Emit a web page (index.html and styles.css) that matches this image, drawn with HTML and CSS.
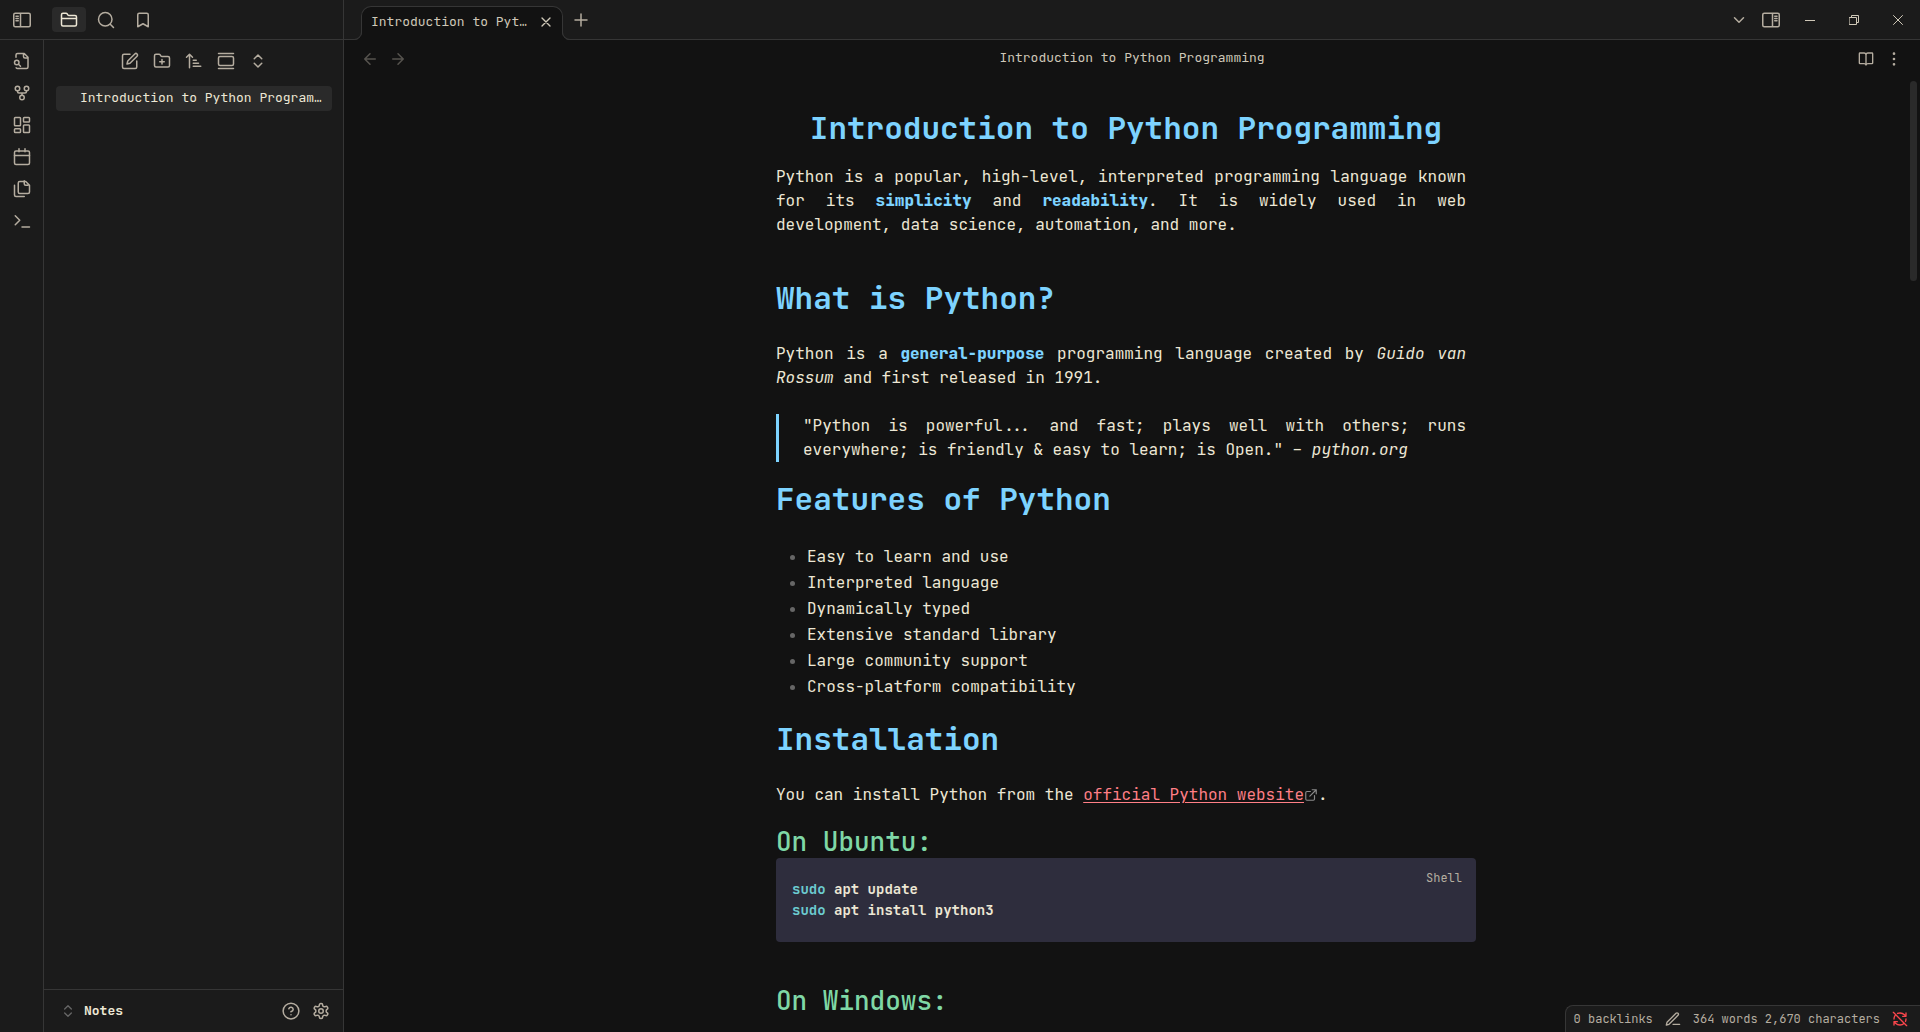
FILE: index.html
```html
<!DOCTYPE html>
<html lang="en">
<head>
<meta charset="utf-8">
<meta name="viewport" content="width=device-width, initial-scale=1">
<title>Introduction to Python Programming - Notes</title>
<link rel="stylesheet" href="styles.css">
</head>
<body>
<div class="app">
  <aside class="left">
    <header class="left-tabs">
      <button class="icon-btn ribbon-toggle" aria-label="Toggle left sidebar"><svg viewBox="0 0 24 24"><rect x="1" y="3" width="22" height="18" rx="2"/><path d="M10 4v16M4 7h3M4 10h3M4 13h3"/></svg></button>
      <button class="icon-btn side-tab active" aria-label="Files"><svg viewBox="0 0 24 24"><path d="M20 20a2 2 0 0 0 2-2V8a2 2 0 0 0-2-2h-7.900a2 2 0 0 1-1.690-.9L9.600 3.900A2 2 0 0 0 7.930 3H4a2 2 0 0 0-2 2v13a2 2 0 0 0 2 2ZM2 10h20"/></svg></button>
      <button class="icon-btn side-tab" aria-label="Search"><svg viewBox="0 0 24 24"><circle cx="11" cy="11" r="9"/><path d="m22 22-4.300-4.300"/></svg></button>
      <button class="icon-btn side-tab" aria-label="Bookmarks"><svg viewBox="0 0 24 24"><path d="m19 21-7-4-7 4V5a2 2 0 0 1 2-2h10a2 2 0 0 1 2 2z"/></svg></button>
    </header>
    <div class="left-body">
      <nav class="ribbon" aria-label="Ribbon">
        <button class="icon-btn" aria-label="Quick switcher"><svg viewBox="0 0 24 24"><path d="M14 2v4a2 2 0 0 0 2 2h4M4.270 21A2 2 0 0 0 6 22h12a2 2 0 0 0 2-2V7l-5-5H6a2 2 0 0 0-2 2v3M8 17l2 2"/><circle cx="5" cy="14" r="3"/></svg></button>
        <button class="icon-btn" aria-label="Graph view"><svg viewBox="0 0 24 24"><circle cx="12" cy="18" r="3"/><circle cx="6" cy="6" r="3"/><circle cx="18" cy="6" r="3"/><path d="M18 9v1a2 2 0 0 1-2 2H8a2 2 0 0 1-2-2V9M12 12v3"/></svg></button>
        <button class="icon-btn" aria-label="New canvas"><svg viewBox="0 0 24 24"><rect x="2" y="2" width="8" height="11" rx="1"/><rect x="14" y="2" width="8" height="6" rx="1"/><rect x="14" y="12" width="8" height="10" rx="1"/><rect x="2" y="17" width="8" height="5" rx="1"/></svg></button>
        <button class="icon-btn" aria-label="Daily note"><svg viewBox="0 0 24 24"><rect x="2" y="4" width="20" height="18" rx="2"/><path d="M16 1v4M8 1v4M2 10h20"/></svg></button>
        <button class="icon-btn" aria-label="Templates"><svg viewBox="0 0 24 24"><path d="M20 7h-3a2 2 0 0 1-2-2V1M9 18a2 2 0 0 1-2-2V4a2 2 0 0 1 2-2h8l5 5v9a2 2 0 0 1-2 2ZM2 7v13a2 2 0 0 0 2 2h11"/></svg></button>
        <button class="icon-btn" aria-label="Command palette"><svg viewBox="0 0 24 24"><path d="m3 17 6-6-6-6M12 20h10"/></svg></button>
      </nav>
      <section class="files">
        <div class="file-actions">
          <button class="icon-btn" aria-label="New note"><svg viewBox="0 0 24 24"><path d="M12 3H4a2 2 0 0 0-2 2v15a2 2 0 0 0 2 2h15a2 2 0 0 0 2-2v-8M18.400 2.600a2.100 2.100 0 0 1 3 3L12 15l-4 1 1-4Z"/></svg></button>
          <button class="icon-btn" aria-label="New folder"><svg viewBox="0 0 24 24"><path d="M12 10v6M9 13h6M20 20a2 2 0 0 0 2-2V8a2 2 0 0 0-2-2h-7.900a2 2 0 0 1-1.690-.9L9.600 3.900A2 2 0 0 0 7.930 3H4a2 2 0 0 0-2 2v13a2 2 0 0 0 2 2Z"/></svg></button>
          <button class="icon-btn" aria-label="Sort order"><svg viewBox="0 0 24 24"><path d="m2 7 4-4 4 4M6 3v18M11 11h4M11 15h7M11 19h10"/></svg></button>
          <button class="icon-btn" aria-label="Auto-reveal file"><svg viewBox="0 0 24 24"><path d="M2 2h20M2 22h20"/><rect x="2" y="6" width="20" height="12" rx="2"/></svg></button>
          <button class="icon-btn" aria-label="Expand all"><svg viewBox="0 0 24 24"><path d="m7 15 5 5 5-5M7 9l5-5 5 5"/></svg></button>
        </div>
        <a class="file" href="#note">Introduction to Python Programming</a>
        <footer class="vault">
          <button class="vault-name"><svg class="dim" viewBox="0 0 24 24"><path d="m7 15 5 5 5-5M7 9l5-5 5 5"/></svg>Notes</button>
          <button class="icon-btn" aria-label="Help"><svg viewBox="0 0 24 24"><circle cx="12" cy="12" r="10.500"/><path d="M9.090 9a3 3 0 0 1 5.830 1c0 2-3 3-3 3M12 17h.01"/></svg></button>
          <button class="icon-btn" aria-label="Settings"><svg viewBox="0 0 24 24"><path d="M12.220 2h-.44a2 2 0 0 0-2 2v.18a2 2 0 0 1-1 1.730l-.43.25a2 2 0 0 1-2 0l-.15-.08a2 2 0 0 0-2.730.73l-.22.38a2 2 0 0 0 .73 2.730l.15.1a2 2 0 0 1 1 1.720v.51a2 2 0 0 1-1 1.740l-.15.09a2 2 0 0 0-.73 2.730l.22.38a2 2 0 0 0 2.730.73l.15-.08a2 2 0 0 1 2 0l.43.25a2 2 0 0 1 1 1.730V20a2 2 0 0 0 2 2h.44a2 2 0 0 0 2-2v-.18a2 2 0 0 1 1-1.730l.43-.25a2 2 0 0 1 2 0l.15.08a2 2 0 0 0 2.730-.73l.22-.39a2 2 0 0 0-.73-2.730l-.15-.08a2 2 0 0 1-1-1.740v-.5a2 2 0 0 1 1-1.740l.15-.09a2 2 0 0 0 .73-2.730l-.22-.38a2 2 0 0 0-2.730-.73l-.15.08a2 2 0 0 1-2 0l-.43-.25a2 2 0 0 1-1-1.730V4a2 2 0 0 0-2-2z"/><circle cx="12" cy="12" r="3"/></svg></button>
        </footer>
      </section>
    </div>
  </aside>

  <main class="workspace">
    <header class="tab-bar">
      <div class="tab">
        <span class="tab-title">Introduction to Python Programming</span>
        <button class="tab-close" aria-label="Close tab"><svg viewBox="0 0 24 24"><path d="M18 6 6 18M6 6l12 12"/></svg></button>
      </div>
      <button class="icon-btn new-tab" aria-label="New tab"><svg viewBox="0 0 24 24"><path d="M4 12h16M12 4v16"/></svg></button>
      <div class="window-tools">
        <button class="icon-btn" aria-label="Tab list"><svg viewBox="0 0 24 24"><path d="m6 9 6 6 6-6"/></svg></button>
        <button class="icon-btn" aria-label="Toggle right sidebar"><svg viewBox="0 0 24 24"><rect x="1" y="3" width="22" height="18" rx="2"/><path d="M14 4v16M17 7h3M17 10h3M17 13h3"/></svg></button>
      </div>
      <div class="window-controls">
        <button aria-label="Minimize"><svg viewBox="0 0 10 10"><path d="M0 5.500h10"/></svg></button>
        <button aria-label="Restore"><svg viewBox="0 0 10 10"><path d="M.5 2.500h7v7h-7zM2.500 2.500v-2h7v7h-2"/></svg></button>
        <button aria-label="Close"><svg viewBox="0 0 10 10"><path d="m.5.5 9 9M9.500.5l-9 9"/></svg></button>
      </div>
    </header>
    <div class="view-header">
      <div class="history">
        <button class="icon-btn" aria-label="Back"><svg viewBox="0 0 24 24"><path d="m12 19-7-7 7-7M19 12H5"/></svg></button>
        <button class="icon-btn" aria-label="Forward"><svg viewBox="0 0 24 24"><path d="M5 12h14M12 5l7 7-7 7"/></svg></button>
      </div>
      <div class="view-title">Introduction to Python Programming</div>
      <div class="view-actions">
        <button class="icon-btn" aria-label="Reading view"><svg viewBox="0 0 24 24"><path d="M12 6v15M3 19a1 1 0 0 1-1-1V4a1 1 0 0 1 1-1h6a3 3 0 0 1 3 3 3 3 0 0 1 3-3h6a1 1 0 0 1 1 1v14a1 1 0 0 1-1 1h-6a3 3 0 0 0-3 2 3 3 0 0 0-3-2z"/></svg></button>
        <button class="icon-btn" aria-label="More options"><svg viewBox="0 0 24 24"><circle cx="12" cy="12" r="1"/><circle cx="12" cy="4" r="1"/><circle cx="12" cy="20" r="1"/></svg></button>
      </div>
    </div>
    <div class="scroller">
      <article class="note" id="note">
        <h1>Introduction to Python Programming</h1>
        <p>Python is a popular, high-level, interpreted programming language known for its <strong>simplicity</strong> and <strong>readability</strong>. It is widely used in web development, data science, automation, and more.</p>
        <h2>What is Python?</h2>
        <p>Python is a <strong>general-purpose</strong> programming language created by <em>Guido van Rossum</em> and first released in 1991.</p>
        <blockquote>"Python is powerful... and fast; plays well with others; runs everywhere; is friendly &amp; easy to learn; is Open." – <em>python.org</em></blockquote>
        <h2>Features of Python</h2>
        <ul>
          <li>Easy to learn and use</li>
          <li>Interpreted language</li>
          <li>Dynamically typed</li>
          <li>Extensive standard library</li>
          <li>Large community support</li>
          <li>Cross-platform compatibility</li>
        </ul>
        <h2>Installation</h2>
        <p class="tight">You can install Python from the <a href="#python">official Python website</a><svg class="external" viewBox="0 0 24 24"><path d="M14 3h7v7M10 14 21 3M18 13v6a2 2 0 0 1-2 2H5a2 2 0 0 1-2-2V8a2 2 0 0 1 2-2h6"/></svg>.</p>
        <h3>On Ubuntu:</h3>
        <div class="code">
          <pre><code><span class="cmd">sudo</span> apt update
<span class="cmd">sudo</span> apt install python3</code></pre>
          <button class="lang">Shell</button>
        </div>
        <h3>On Windows:</h3>
      </article>
      <div class="track"><div class="thumb"></div></div>
    </div>
    <footer class="status">
      <span>0 backlinks</span>
      <svg viewBox="0 0 24 24"><path d="M12 20h10M16.500 3.500a2.100 2.100 0 0 1 3 3L6 20l-4 1 1-4Z"/></svg>
      <span>364 words 2,670 characters</span>
      <svg class="sync-off" viewBox="0 0 24 24"><path d="M21 8 18.740 5.740A9.750 9.750 0 0 0 12 3c-1.300 0-2.600.3-3.700.7M8 16H3v5M3 12c0-2.500 1-4.800 2.600-6.400M3 16l2.260 2.260A9.750 9.750 0 0 0 12 21c2.500 0 4.700-1 6.400-2.600M21 12c0 1.300-.3 2.600-.7 3.700M21 3v5h-5M2 2l20 20"/></svg>
    </footer>
  </main>
</div>
</body>
</html>
```
FILE: styles.css
```css
:root {
  --bg: #121212;
  --bg-side: #1b1b1b;
  --bg-active: #2a2a2a;
  --line: #363636;
  --text: #ede7d5;
  --muted: #b5ada0;
  --faint: #666666;
  --blue: #7dd3ff;
  --green: #7fd8a6;
  --red: #ff7f86;
  --mono: "JetBrains Mono", "DejaVu Sans Mono", monospace;
}

* { box-sizing: border-box; }

body {
  margin: 0;
  background: var(--bg);
  color: var(--text);
  font: 13px/20px var(--mono);
}

button {
  padding: 0;
  border: 0;
  background: none;
  color: inherit;
  font: inherit;
}

svg {
  display: block;
  width: 18px;
  height: 18px;
  fill: none;
  stroke: currentColor;
  stroke-width: 2;
  stroke-linecap: round;
  stroke-linejoin: round;
}

.icon-btn {
  display: flex;
  align-items: center;
  justify-content: center;
  color: var(--muted);
}

.app {
  display: grid;
  grid-template-columns: 344px minmax(0, 1fr);
  height: 100vh;
}

/* Left side */
.left {
  display: flex;
  flex-direction: column;
  background: var(--bg-side);
  border-right: 1px solid var(--line);
}

.left-tabs {
  display: flex;
  align-items: center;
  gap: 3px;
  height: 40px;
  border-bottom: 1px solid var(--line);
}

.ribbon-toggle { width: 44px; margin-right: 5px; }
.side-tab { width: 34px; height: 25px; border-radius: 4px; }
.side-tab.active { background: var(--bg-active); color: var(--text); }

.left-body { display: flex; flex: 1; min-height: 0; }

.ribbon {
  display: flex;
  flex-direction: column;
  gap: 8px;
  width: 44px;
  padding: 9px 0 0 1px;
  border-right: 1px solid var(--line);
}
.ribbon .icon-btn { height: 24px; }

.files { display: flex; flex: 1; flex-direction: column; min-width: 0; }

.file-actions {
  display: flex;
  justify-content: center;
  padding: 9px 0 13px 1px;
}
.file-actions .icon-btn { width: 32px; height: 24px; }

.file {
  margin: 0 11px 0 12px;
  padding: 2px 8px 3px 24px;
  overflow: hidden;
  border-radius: 4px;
  background: var(--bg-active);
  color: var(--text);
  text-decoration: none;
  text-overflow: ellipsis;
  white-space: nowrap;
}

.vault {
  display: flex;
  align-items: center;
  gap: 12px;
  height: 43px;
  margin-top: auto;
  padding: 0 13px 0 16px;
  border-top: 1px solid var(--line);
}
.vault-name {
  display: flex;
  align-items: center;
  gap: 8px;
  margin-right: auto;
  font-weight: 700;
}
.vault-name svg { width: 16px; height: 16px; }
.dim { color: var(--faint); }

/* Workspace */
.workspace {
  position: relative;
  display: flex;
  flex-direction: column;
  min-width: 0;
  min-height: 0;
}

.tab-bar {
  display: flex;
  align-items: center;
  height: 40px;
  padding-left: 17px;
  background: var(--bg-side);
  border-bottom: 1px solid var(--line);
}

.tab {
  position: relative;
  display: flex;
  align-items: center;
  align-self: flex-end;
  gap: 10px;
  width: 202px;
  height: 34px;
  margin-bottom: -1px;
  padding: 0 8px 4px 9px;
  background: var(--bg);
  border: 1px solid var(--line);
  border-bottom: 0;
  border-radius: 10px 10px 0 0;
}

/* Outward curves at the foot of the active tab */
.tab::before,
.tab::after {
  content: "";
  position: absolute;
  bottom: 0;
  width: 16px;
  height: 16px;
  border-radius: 50%;
  box-shadow: inset 0 0 0 1px var(--line), 0 0 0 32px var(--bg);
}
.tab::before { left: -16px; clip-path: inset(50% -1px 0 50%); }
.tab::after { right: -16px; clip-path: inset(50% 50% 0 -1px); }

.tab-title {
  flex: 1;
  overflow: hidden;
  color: #cfc8b8;
  text-overflow: ellipsis;
  white-space: nowrap;
}
.tab-close { color: #cfc8b8; }
.tab-close svg { width: 16px; height: 16px; }
.new-tab { width: 36px; }

.window-tools { display: flex; margin-left: auto; padding-right: 1px; }
.window-tools .icon-btn { width: 32px; }

.window-controls { display: flex; color: #cfc8b8; }
.window-controls button {
  display: flex;
  justify-content: center;
  width: 44px;
}
.window-controls svg { width: 10px; height: 10px; stroke-width: 1; }

.view-header {
  display: grid;
  grid-template-columns: 1fr auto 1fr;
  align-items: center;
  height: 40px;
  padding: 0 12px 2px;
  color: var(--muted);
}
.history, .view-actions { display: flex; }
.history .icon-btn { width: 28px; color: #56534e; }
.view-actions { justify-content: flex-end; }
.view-actions .icon-btn { width: 28px; }
.view-actions svg { width: 16px; height: 16px; }
.view-title { margin-bottom: 2px; color: #cfc8b8; }

.scroller {
  display: flex;
  flex: 1;
  min-height: 0;
  overflow: hidden;
}

.track { width: 12px; padding: 1px 3px 0 2px; }
.thumb { height: 200px; border-radius: 4px; background: var(--bg-active); }

.note {
  width: 100%;
  max-width: 700px;
  margin: 0 auto;
  padding-top: 31px;
  font-size: 16px;
  line-height: 24px;
}

.note h1, .note h2 {
  margin: 0;
  color: var(--blue);
  font-size: 31px;
  font-weight: 700;
  line-height: 34px;
}
.note h1 { padding-bottom: 20px; text-align: center; }
.note h2 { padding: 20px 0 27px; }

.note h3 {
  margin: 0;
  padding: 20px 0 2px;
  color: var(--green);
  font-size: 26px;
  font-weight: 500;
  line-height: 29px;
}

.note p { margin: 0 10px 24px 0; text-align: justify; }
.note p.tight { margin-bottom: 0; }
.note strong { color: var(--blue); font-weight: 800; }
.note a { color: var(--red); text-underline-offset: 2px; }

.note blockquote {
  margin: 0 10px 0 0;
  padding-left: 24px;
  border-left: 3px solid var(--blue);
  text-align: justify;
}

.note ul { margin: 0; padding: 1px 0 2px 14px; list-style: none; }
.note li { display: flex; align-items: center; gap: 12px; line-height: 26px; }
.note li::before {
  content: "";
  width: 5px;
  height: 5px;
  border-radius: 50%;
  background: var(--faint);
}

.external { display: inline-block; width: 14px; height: 14px; color: #8a8a8a; vertical-align: -2px; }

.code {
  display: flex;
  align-items: flex-start;
  justify-content: space-between;
  height: 84px;
  margin-bottom: 24px;
  padding: 8px 14px 0 16px;
  border-radius: 4px;
  background: #2e2d3d;
}
.code pre { margin: 0; padding-top: 13px; font: 700 14px/21px var(--mono); }
.code code { font: inherit; }
.cmd { color: #6ccbd0; }
.lang { color: var(--muted); font-size: 12px; }

.status {
  position: absolute;
  right: 0;
  bottom: 0;
  display: flex;
  align-items: center;
  gap: 12px;
  height: 27px;
  padding: 0 12px 0 8px;
  border: 1px solid var(--line);
  border-width: 1px 0 0 1px;
  border-radius: 8px 0 0 0;
  background: var(--bg-side);
  color: var(--muted);
  font-size: 12px;
}
.status svg { width: 16px; height: 16px; }
.status .sync-off { color: #fb464c; }
```
